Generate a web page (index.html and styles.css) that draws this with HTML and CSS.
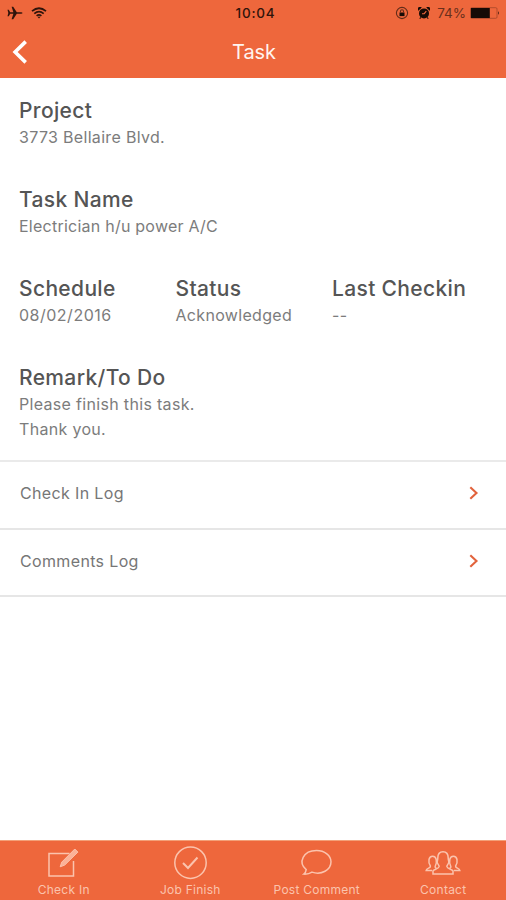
FILE: index.html
```html
<!DOCTYPE html>
<html lang="en">
<head>
<meta charset="utf-8">
<title>Task</title>
<link rel="stylesheet" href="styles.css">
</head>
<body>
<div class="screen">
  <header class="header">
    <div class="status-bar">
      <div class="status-left">
        <svg width="16" height="14" viewBox="0 0 16 14"><path d="M0.5 3.8h1.3L3.2 6.2h3.2L4.600 0.800h1.600l3.600 5.400h4.300q1.400 0 1.400.8t-1.400.8H9.800L6.200 13.200H4.600L6.400 7.800H3.200L1.800 10.200H0.500L1.300 7z"/></svg>
        <svg width="16" height="12" viewBox="0 0 16 12" class="wifi"><path d="M1 4.200Q8-1.700 15 4.200M3.300 6.600Q8 2.700 12.700 6.600M5.600 8.900Q8 7 10.400 8.900"/><path d="M6.700 10L8 11.400 9.300 10Q8 9 6.700 10z" class="dot"/></svg>
      </div>
      <div class="clock">10:04</div>
      <div class="status-right">
        <svg width="14" height="14" viewBox="0 0 14 14"><circle cx="7" cy="7" r="5.600" class="ring"/><path d="M4.500 6.500h5v3.600h-5z"/><path d="M5.500 6.500V5.300a1.500 1.500 0 0 1 3 0v1.200" class="ring"/></svg>
        <svg width="12" height="12" viewBox="0 0 12 12" class="alarm"><circle cx="6" cy="6.400" r="5"/><path d="M.4 3.700A2.200 2.200 0 0 1 3.700.4zM11.600 3.700A2.200 2.200 0 0 0 8.300.4zM2.700 9L1.300 11.700h1.500zM9.300 9l1.400 2.700H9.200z"/><path d="M4 6.700H6.200L8.300 4.200" class="hands"/></svg>
        <span class="percent">74%</span>
        <svg width="30" height="12" viewBox="0 0 30 12"><rect x=".5" y=".7" width="26.500" height="10.600" rx="1.200" class="case"/><path d="M1 1h18.800v10H1z"/><path d="M28 4q1.600 2 0 4z"/></svg>
      </div>
    </div>
    <div class="nav-bar">
      <svg class="back" width="16" height="26" viewBox="0 0 16 26"><path d="M13.700 2.600L3.100 13 13.700 23.400"/></svg>
      <h1 class="title">Task</h1>
    </div>
  </header>
  <main class="content">
    <section class="details">
      <div class="field"><h2>Project</h2><p>3773 Bellaire Blvd.</p></div>
      <div class="field"><h2>Task Name</h2><p class="task">Electrician h/u power A/C</p></div>
      <div class="columns">
        <div class="field"><h2>Schedule</h2><p class="date">08/02/2016</p></div>
        <div class="field"><h2>Status</h2><p>Acknowledged</p></div>
        <div class="field"><h2>Last Checkin</h2><p>--</p></div>
      </div>
      <div class="field"><h2>Remark/To Do</h2><p>Please finish this task.<br>Thank you.</p></div>
    </section>
    <nav class="logs">
      <a class="log"><span>Check In Log</span><svg width="10" height="14" viewBox="0 0 10 14"><path d="M1.300 1.200L7.500 7 1.300 12.800"/></svg></a>
      <a class="log"><span>Comments Log</span><svg width="10" height="14" viewBox="0 0 10 14"><path d="M1.300 1.200L7.500 7 1.300 12.800"/></svg></a>
    </nav>
  </main>
  <footer class="tabs">
    <a class="tab"><svg width="36" height="36" viewBox="0 0 36 36"><path d="M24.500 9.500H4V32h24.500V17"/><path d="M15.200 22.800l1.500-4.600L29.800 5l3.100 3.100-13.200 13z" class="pencil"/></svg><span>Check In</span></a>
    <a class="tab"><svg width="36" height="36" viewBox="0 0 36 36"><circle cx="18.500" cy="18.700" r="15.700"/><path d="M11 19l5 5L25.500 13.500" class="tick"/></svg><span>Job Finish</span></a>
    <a class="tab"><svg width="36" height="36" viewBox="0 0 36 36"><path d="M8.200 25.600C-.3 18.500 5.200 6.500 18.500 6.500c8.200 0 14.500 5 14.500 11.300 0 8.200-9.600 13.600-19 10.300-2.200 1.500-4.900 2.200-8.200 2q2.100-1.700 2.400-4.500z"/></svg><span>Post Comment</span></a>
    <a class="tab"><svg width="36" height="36" viewBox="0 0 36 36"><path d="M8 30v-3.200c1-1.600 5.800-1.800 6.200-4.300 0-1.500-2-2.500-2-4.500 0-1.300.6-2 .6-4 0-4 2-6.300 5.200-6.300s5.200 2.300 5.200 6.300c0 2 .6 2.700.6 4 0 2-2 3-2 4.500.4 2.500 5.200 2.700 6.200 4.300V30z"/><path d="M11.500 24.300c-1.500-.5-1.600-1.500-1.100-2.500 1.200-2 1.200-4 .8-6.300-.8-4.300-6.400-4.300-7.200 0-.4 2.300-.2 4.500 1.400 6.500.3 2.500-3.600 1.700-4.200 4.500H7M24.500 24.300c1.500-.5 1.600-1.500 1.100-2.500-1.200-2-1.200-4-.8-6.300.8-4.300 6.400-4.300 7.200 0 .4 2.300.2 4.500-1.400 6.500-.3 2.500 3.600 1.700 4.200 4.500H29"/></svg><span>Contact</span></a>
  </footer>
</div>
</body>
</html>
```
FILE: styles.css
```css
* { box-sizing: border-box; margin: 0; padding: 0; }
body { font-family: Inter, sans-serif; background: #fff; }
svg { display: block; flex: none; }
.screen { width: 506px; height: 900px; display: flex; flex-direction: column; background: #fff; }
.header { height: 78px; background: #ee673c; }
.status-bar { height: 26px; display: grid; grid-template-columns: 1fr auto 1fr; align-items: center; padding: 0 6px 0 8px; color: #30140b; }
.status-left, .status-right { display: flex; align-items: center; }
.status-left { gap: 8px; fill: #30140b; margin-left: -1px; }
.status-right { justify-content: flex-end; fill: #170b06; }
.wifi { fill: none; stroke: #30140b; stroke-width: 1.7; }
.wifi .dot { fill: #30140b; stroke: none; }
.clock { padding-left: 3px; font-size: 13.5px; font-weight: 500; letter-spacing: .8px; }
.ring { fill: none; stroke: #642c19; stroke-width: 1.1; }
.alarm { margin-left: 9px; }
.hands { fill: none; stroke: #ee673c; stroke-width: 1.1; }
.percent { margin: 0 4px 0 7px; font-size: 13.5px; letter-spacing: 0; color: #6b2f1b; }
.case { fill: none; stroke: #a54629; stroke-width: .8; }
.nav-bar { height: 52px; display: grid; grid-template-columns: 1fr auto 1fr; align-items: center; padding: 0 12px; }
.back { fill: none; stroke: #fff; stroke-width: 3.6; }
.title { padding-left: 2px; font-size: 20px; line-height: 26px; font-weight: 400; letter-spacing: -.1px; color: #fff4f0; }
.content { flex: 1; }
.details { height: 382px; padding: 19px 19px 0; display: flex; flex-direction: column; gap: 36.200px; }
.columns { display: grid; grid-template-columns: 156.5px 156.5px 1fr; }
.field h2 { font-size: 21px; line-height: 28px; font-weight: 500; letter-spacing: .35px; color: #555; white-space: nowrap; }
.field p { font-size: 16px; line-height: 24.500px; letter-spacing: .32px; color: #7c7c7c; padding-top: .3px; }
.field .task { letter-spacing: .24px; }
.field .date { letter-spacing: .5px; }
.logs { border-top: 2px solid #eaeaea; }
.log { height: 67.500px; padding: 0 27px 3px 20px; display: flex; align-items: center; justify-content: space-between; border-bottom: 2px solid #e6e6e6; font-size: 16px; letter-spacing: .35px; color: #767676; }
.log svg { fill: none; stroke: #e2633d; stroke-width: 2.100; }
.tabs { height: 60px; display: grid; grid-template-columns: repeat(4, 1fr); background: #ee673c; border-top: 1px solid #f3a078; }
.tab { display: flex; flex-direction: column; align-items: center; padding-top: 3px; color: #fbc3ad; font-size: 12px; line-height: 16px; letter-spacing: .25px; }
.tab svg { fill: none; stroke: #fbc3ad; stroke-width: 1.5; }
.tab span { margin-top: 2px; padding-left: 1px; white-space: nowrap; }
.tab .pencil { fill: #fbb298; stroke-width: 1; }
.tab .tick { stroke-width: 2; }
```
